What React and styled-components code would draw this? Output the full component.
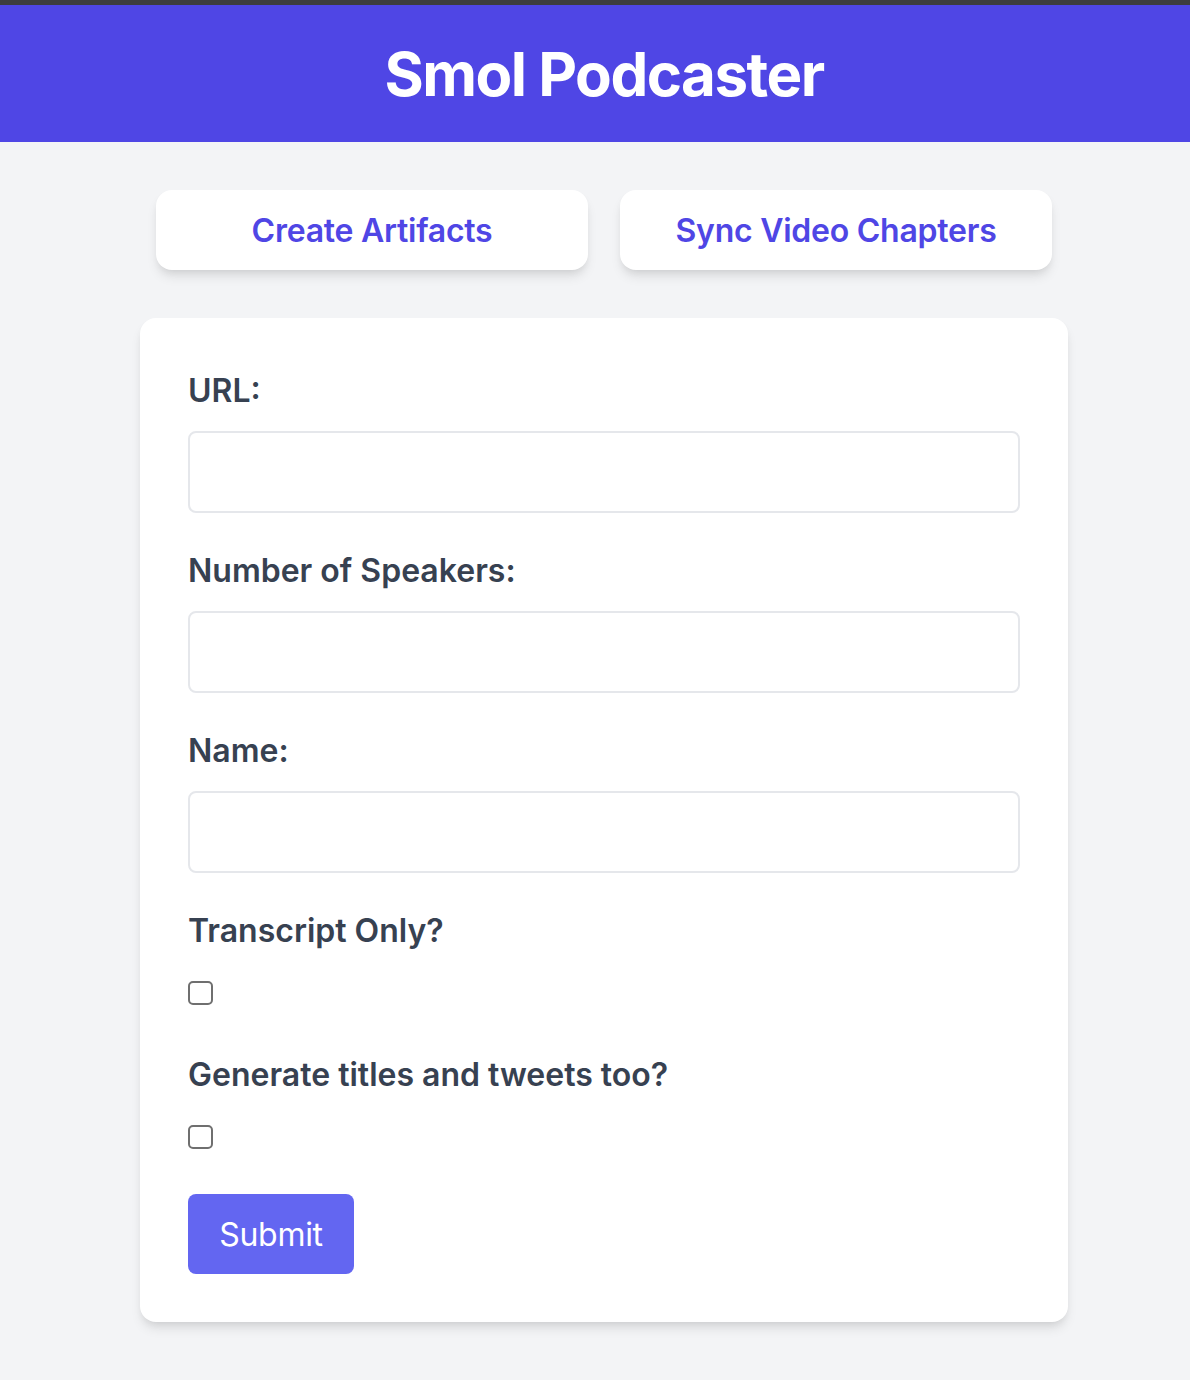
import styled, { createGlobalStyle } from 'styled-components';

const GlobalStyle = createGlobalStyle`
  html, body {
    margin: 0;
    padding: 0;
    background-color: #f3f4f6;
    overflow-x: hidden;
  }
  * {
    box-sizing: border-box;
  }
`;

const Page = styled.div`
  width: 1208px;
  min-height: 1380px;
  font-family: Inter, 'Noto Sans', sans-serif;
  background-color: #f3f4f6;
`;

const Header = styled.header`
  background-color: #4f46e5;
  border-top: 5px solid #3d3d3f;
  height: 142px;
  display: flex;
  align-items: center;
  justify-content: center;

  & h1 {
    margin: 0;
    color: #ffffff;
    font-size: 60px;
    font-weight: 700;
    letter-spacing: -1.5px;
    line-height: 72px;
  }
`;

const Main = styled.main`
  width: 928px;
  margin: 48px auto 0;
`;

const Tabs = styled.div`
  display: grid;
  grid-template-columns: 1fr 1fr;
  gap: 32px;
  padding: 0 16px;
`;

const TabButton = styled.button`
  height: 80px;
  border: none;
  border-radius: 16px;
  background-color: #ffffff;
  color: #4f46e5;
  font-family: inherit;
  font-size: 32px;
  font-weight: 600;
  letter-spacing: -0.25px;
  box-shadow: 0 8px 12px -2px rgba(0, 0, 0, 0.1), 0 4px 8px -4px rgba(0, 0, 0, 0.1);
  cursor: pointer;
`;

const Card = styled.form`
  margin-top: 48px;
  background-color: #ffffff;
  border-radius: 16px;
  padding: 53px 48px 48px;
  box-shadow: 0 8px 12px -2px rgba(0, 0, 0, 0.1), 0 4px 8px -4px rgba(0, 0, 0, 0.1);
`;

const Field = styled.div`
  display: flex;
  flex-direction: column;
  align-items: flex-start;
  margin-bottom: ${(p) => p.$gap || 38}px;
`;

const Label = styled.label`
  color: #374151;
  font-size: 32px;
  font-weight: 600;
  line-height: 40px;
  margin-bottom: ${(p) => (p.$check ? 30 : 20)}px;
`;

const TextInput = styled.input`
  width: 100%;
  height: 82px;
  border: 2px solid #e5e7eb;
  border-radius: 8px;
  padding: 0 20px;
  font-family: inherit;
  font-size: 32px;
  outline: none;
`;

const Checkbox = styled.input.attrs({ type: 'checkbox' })`
  appearance: none;
  margin: 0;
  width: 25px;
  height: 24px;
  border: 2px solid #6f6f6f;
  border-radius: 5px;
  background: #ffffff;
`;

const SubmitButton = styled.button`
  width: 166px;
  height: 80px;
  border: none;
  border-radius: 8px;
  background-color: #6366f1;
  color: #ffffff;
  font-family: inherit;
  font-size: 32px;
  font-weight: 400;
  letter-spacing: -0.3px;
  cursor: pointer;
`;

function App() {
  return (
    <Page>
      <GlobalStyle />
      <Header>
        <h1>Smol Podcaster</h1>
      </Header>
      <Main>
        <Tabs>
          <TabButton>Create Artifacts</TabButton>
          <TabButton>Sync Video Chapters</TabButton>
        </Tabs>
        <Card onSubmit={(e) => e.preventDefault()}>
          <Field>
            <Label htmlFor="url">URL:</Label>
            <TextInput id="url" type="text" />
          </Field>
          <Field>
            <Label htmlFor="speakers">Number of Speakers:</Label>
            <TextInput id="speakers" type="number" />
          </Field>
          <Field>
            <Label htmlFor="name">Name:</Label>
            <TextInput id="name" type="text" />
          </Field>
          <Field $gap={50}>
            <Label htmlFor="transcript" $check>
              Transcript Only?
            </Label>
            <Checkbox id="transcript" />
          </Field>
          <Field $gap={45}>
            <Label htmlFor="titles" $check>
              Generate titles and tweets too?
            </Label>
            <Checkbox id="titles" />
          </Field>
          <SubmitButton type="submit">Submit</SubmitButton>
        </Card>
      </Main>
    </Page>
  );
}

export default App;
